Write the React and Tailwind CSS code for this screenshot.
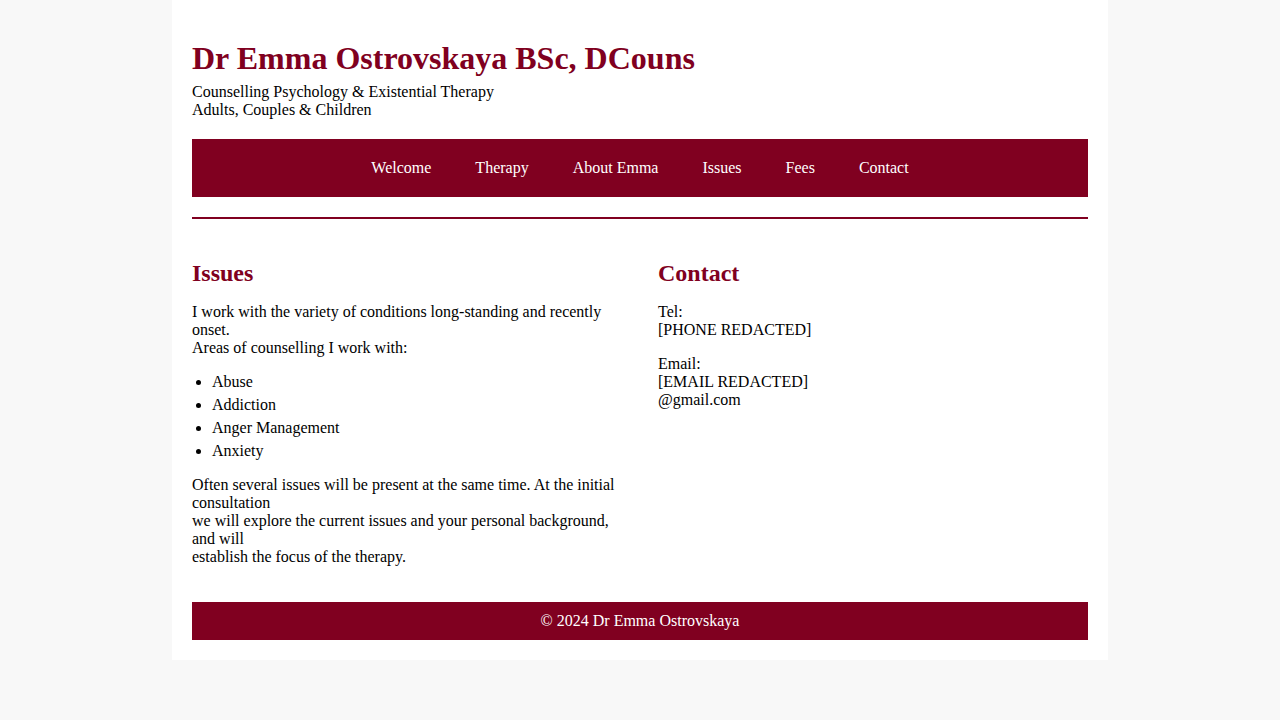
import React from "react";

const navLinks = ["Welcome", "Therapy", "About Emma", "Issues", "Fees", "Contact"];
const issues = ["Abuse", "Addiction", "Anger Management", "Anxiety"];

const App = () => {
  return (
    <div className="min-h-screen bg-[#f8f8f8] font-['Liberation_Serif',serif] text-base leading-[18px] text-black">
      <div className="mx-auto w-[936px] bg-white p-5">
        <header className="pt-5">
          <h1 className="mb-[6px] text-[32px] font-bold leading-[1.15] text-[#800020]">
            Dr Emma Ostrovskaya BSc, DCouns
          </h1>
          <p>
            Counselling Psychology &amp; Existential Therapy
            <br />
            Adults, Couples &amp; Children
          </p>
        </header>

        <nav className="mt-5 bg-[#800020] py-5">
          <ul className="flex justify-center gap-11">
            {navLinks.map((link) => (
              <li key={link}>
                <a href="#" className="text-white">
                  {link}
                </a>
              </li>
            ))}
          </ul>
        </nav>

        <hr className="mt-5 border-0 border-t-2 border-[#800020]" />

        <main className="mt-[41px] flex gap-9">
          <section className="flex-1">
            <h2 className="mb-4 text-2xl font-bold leading-[1.15] text-[#800020]">Issues</h2>
            <p>
              I work with the variety of conditions long-standing and recently onset.
              <br />
              Areas of counselling I work with:
            </p>
            <ul className="my-4 list-disc space-y-[5px] pl-5">
              {issues.map((item) => (
                <li key={item}>{item}</li>
              ))}
            </ul>
            <p>
              Often several issues will be present at the same time. At the initial consultation
              <br />
              we will explore the current issues and your personal background, and will
              <br />
              establish the focus of the therapy.
            </p>
          </section>
          <section className="flex-1">
            <h2 className="mb-4 text-2xl font-bold leading-[1.15] text-[#800020]">Contact</h2>
            <p>
              Tel:
              <br />
              [PHONE REDACTED]
            </p>
            <p className="mt-4">
              Email:
              <br />
              [EMAIL REDACTED]
              <br />
              @gmail.com
            </p>
          </section>
        </main>

        <footer className="mt-9 bg-[#800020] py-[10px] text-center text-white">
          © 2024 Dr Emma Ostrovskaya
        </footer>
      </div>
    </div>
  );
};

export default App;
